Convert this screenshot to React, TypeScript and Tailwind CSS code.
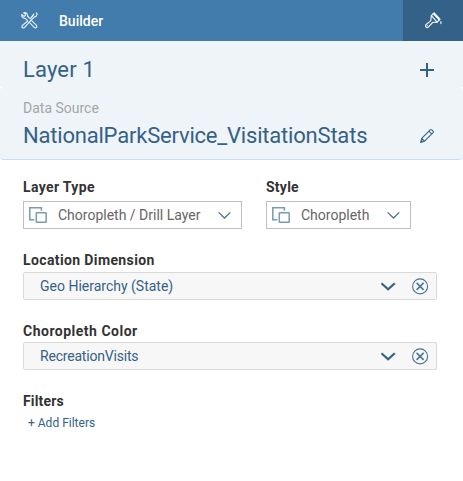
import type { ReactNode } from "react";

function ToolsIcon() {
  return (
    <svg width="17" height="17" viewBox="0 0 17 17" fill="none" stroke="#e6f0f8" strokeWidth="1.15" strokeLinejoin="round" strokeLinecap="round">
      <path d="M.8 2.5 2.9 4.4 4.4 3.4 4.3 1.8 2.6.7C4.9.1 6.8 1.5 6.5 4L8.3 6M.8 2.5C.5 4.8 2 6.6 4.1 6.3L6.4 8.4M10.6 8.7 15.3 13.2C16.6 14.8 14.9 16.7 13.2 15.3L8.6 10.7" />
      <path d="M15.2.9 16.2 1.9 15.2 4.2 13.6 4.9 8.6 9.6 3.7 15.3C1.8 17-.1 14.8 1.6 13.2L6.7 9M9.2 6.9 12.2 3.6 12.8 2Z" />
    </svg>
  );
}

function BrushIcon() {
  return (
    <svg width="17" height="17" viewBox="0 0 17 17" fill="none" stroke="#f1f6fa" strokeWidth="1.15" strokeLinejoin="round" strokeLinecap="round">
      <path d="M6.3 3.6 9.2.9 15 7.2 12.2 10.2Z" />
      <path strokeWidth="1.6" d="M8.5 1.6 14.3 7.8" />
      <path d="M6.3 4 5.8 8.6.9 12.8C-.2 14.5 1.7 16.3 3.3 15.1L7.6 10.5 12 10.1" />
      <path d="M2.3 13.7h.2M15.9 9.6v2" />
    </svg>
  );
}

function PencilIcon() {
  return (
    <svg width="14" height="14" viewBox="0 0 14 14" fill="none" stroke="#346187" strokeWidth="1.05" strokeLinejoin="round">
      <path d="M.6 13.4 1.7 9.4 10.2.9Q11 .2 11.8.9L13.1 2.2Q13.8 3 13.1 3.7L4.6 12.2ZM1.7 9.4 4.6 12.2M8.9 2.2 11.8 5.1M.6 13.4 2.5 11.5" />
    </svg>
  );
}

function LayersIcon() {
  return (
    <svg className="shrink-0" width="18" height="16" viewBox="0 0 18 16" fill="none" stroke="#799ab5" strokeWidth="1.5">
      <path d="M5.3 12.8H.8V.8H12.4V3.8" />
      <rect x="7.3" y="5.7" width="9.9" height="9.5" rx=".5" />
    </svg>
  );
}

function Chevron({ bold = false }: { bold?: boolean }) {
  return bold ? (
    <svg width="15" height="9" viewBox="0 0 15 9" fill="none" stroke="#346187" strokeWidth="2.2">
      <path d="m.4 1.2 6.7 6 6.7-6" />
    </svg>
  ) : (
    <svg width="13" height="8" viewBox="0 0 13 8" fill="none" stroke="#477399" strokeWidth="1.3">
      <path d="m.7 1.4 5.8 5.6 5.8-5.6" />
    </svg>
  );
}

function Select({ label, labelTracking, children, width }: { label: string; labelTracking: string; children: ReactNode; width: string }) {
  return (
    <div className={width}>
      <div className={`h-[21px] text-[14px] leading-[14px] font-bold text-[#333] ${labelTracking}`}>{label}</div>
      <div className="flex h-7 items-center border border-[#bfbfbf] bg-white pl-[5px] pr-[10px]">
        <LayersIcon />
        <span className="ml-[11px] whitespace-nowrap text-[14px] text-[#666]">{children}</span>
        <span className="ml-auto"><Chevron /></span>
      </div>
    </div>
  );
}

function Field({ label, labelClass, value, tracking }: { label: string; labelClass: string; value: string; tracking: string }) {
  return (
    <div>
      <div className={`text-[14px] leading-[14px] font-bold text-[#333] ${labelClass}`}>{label}</div>
      <div className="flex h-7 items-center rounded-[2px] border border-[#d9d9d9] bg-[#f7f7f7] pl-4 pr-[7px]">
        <span className={`whitespace-nowrap text-[14px] text-[#346187] ${tracking}`}>{value}</span>
        <span className="mr-4 ml-auto"><Chevron bold /></span>
        <svg width="17" height="17" viewBox="0 0 17 17" fill="none" stroke="#477399" strokeWidth="1.1">
          <circle cx="8.1" cy="8.4" r="7.5" />
          <path strokeWidth="1.5" d="m4.6 4.9 7 7m0-7-7 7" />
        </svg>
      </div>
    </div>
  );
}

export default function App() {
  return (
    <main className="h-[481px] w-[463px] overflow-hidden bg-white font-['Roboto',sans-serif]">
      <header className="flex h-[41px] items-center bg-[#427cac] pl-[21px]">
        <ToolsIcon />
        <span className="ml-[21px] text-[14px] leading-[14px] font-medium text-white">Builder</span>
        <span className="ml-auto flex h-full w-[60px] items-center justify-center bg-[#346187]"><BrushIcon /></span>
      </header>
      <section className="flex h-[46px] items-center justify-between bg-[#eff4f9] pt-3 pl-[23px] pr-[29px]">
        <h1 className="text-[22px] leading-6 tracking-[0.15px] text-[#346187]">Layer 1</h1>
        <svg width="14" height="14" viewBox="0 0 14 14" stroke="#346187" strokeWidth="2"><path d="M0 7h14M7 0v14" /></svg>
      </section>
      <section className="h-[73px] rounded border-b border-[#cbdff0] bg-[#eff4f9] pt-[14px] pl-[23px] pr-[29px]">
        <div className="text-[14px] leading-[14px] text-[#a6a6a6]">Data Source</div>
        <div className="mt-[9px] flex h-6 items-center justify-between">
          <span className="text-[22px] leading-6 tracking-[-0.2px] text-[#346187]">NationalParkService_VisitationStats</span>
          <PencilIcon />
        </div>
      </section>
      <div className="px-[23px] pt-5 pr-[26px]">
        <div className="flex gap-6">
          <Select label="Layer Type" labelTracking="tracking-[0.35px]" width="w-[219px]">Choropleth / Drill Layer</Select>
          <Select label="Style" labelTracking="tracking-[0.25px]" width="w-[145px]">Choropleth</Select>
        </div>
        <div className="mt-6 flex flex-col gap-6">
          <Field label="Location Dimension" labelClass="h-[19px] tracking-[0.38px]" value="Geo Hierarchy (State)" tracking="tracking-normal" />
          <Field label="Choropleth Color" labelClass="h-[18px] tracking-[0.5px]" value="RecreationVisits" tracking="tracking-[-0.2px]" />
        </div>
        <div className="mt-6 text-[14px] leading-[14px] font-bold tracking-[0.15px] text-[#333]">Filters</div>
        <button className="mt-2 ml-[5px] block text-[12px] leading-[14px] text-[#346187]">+ Add Filters</button>
      </div>
    </main>
  );
}
